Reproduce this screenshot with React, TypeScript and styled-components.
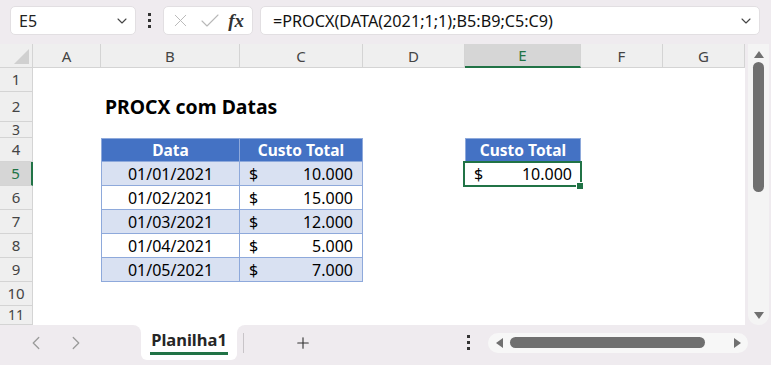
import styled, { createGlobalStyle } from 'styled-components';
import { Check, ChevronDown, ChevronLeft, ChevronRight, Plus, X } from 'lucide-react';

const GREEN = '#217346';
const TABLE_LINE = '#8ea9db';
const BAND = '#d9e1f2';
const HEAD_BLUE = '#4472c4';
const CHROME = '#efebef';
const COLS = '33px 68px 139px 123px 102px 116px 82px 82px';

const letters = ['A', 'B', 'C', 'D', 'E', 'F', 'G'];
const rowHeights = [24, 30, 16, 24, 24, 24, 24, 24, 24, 24, 19];

const data = [
  ['01/01/2021', '10.000'],
  ['01/02/2021', '15.000'],
  ['01/03/2021', '12.000'],
  ['01/04/2021', '5.000'],
  ['01/05/2021', '7.000'],
];

const GlobalStyle = createGlobalStyle`
  html, body {
    margin: 0;
    padding: 0;
  }
  body {
    width: 771px;
    height: 365px;
    overflow: hidden;
    font-family: 'Noto Sans', 'Open Sans', sans-serif;
    color: #000;
  }
`;

function Triangle({ dir }: { dir: 'up' | 'down' | 'left' | 'right' }) {
  const pts = {
    up: '0,7 5,0 10,7',
    down: '0,0 10,0 5,7',
    left: '7,0 7,10 0,5',
    right: '0,0 7,5 0,10',
  }[dir];
  const vertical = dir === 'up' || dir === 'down';
  return (
    <svg width={vertical ? 10 : 7} height={vertical ? 7 : 10}>
      <polygon points={pts} fill="#707070" />
    </svg>
  );
}

function cellsFor(row: number) {
  const cells = letters.map((l) => <Blank key={l} />);

  if (row === 2) {
    cells[1] = (
      <TitleCell key="B">
        <Title>PROCX com Datas</Title>
      </TitleCell>
    );
  }

  if (row === 4) {
    cells[1] = (
      <TableCell key="B" $fill="head" $left $top $center>
        Data
      </TableCell>
    );
    cells[2] = (
      <TableCell key="C" $fill="head" $top $center>
        Custo Total
      </TableCell>
    );
    cells[4] = (
      <TableCell key="E" $fill="head" $left $top $center>
        Custo Total
      </TableCell>
    );
  }

  if (row >= 5 && row <= 9) {
    const [date, cost] = data[row - 5];
    const fill = row % 2 === 1 ? 'band' : 'plain';
    cells[1] = (
      <TableCell key="B" $fill={fill} $left $center>
        {date}
      </TableCell>
    );
    cells[2] = (
      <TableCell key="C" $fill={fill}>
        <Money>
          <span>$</span>
          <span>{cost}</span>
        </Money>
      </TableCell>
    );
  }

  if (row === 5) {
    cells[4] = (
      <Selected key="E">
        <Money>
          <span>$</span>
          <span>10.000</span>
        </Money>
      </Selected>
    );
  }

  return cells;
}

export default function App() {
  return (
    <Window>
      <GlobalStyle />
      <Toolbar>
        <NameBox>
          <span>E5</span>
          <ChevronDown size={16} strokeWidth={1.6} color="#444" />
        </NameBox>
        <KebabSlot>
          <Kebab>
            <i />
            <i />
            <i />
          </Kebab>
        </KebabSlot>
        <FxBox>
          <X size={21} strokeWidth={1.1} color="#b8b8b8" />
          <Check size={24} strokeWidth={1.1} color="#b8b8b8" />
          <Fx>fx</Fx>
        </FxBox>
        <FormulaBox>
          <FormulaText>=PROCX(DATA(2021;1;1);B5:B9;C5:C9)</FormulaText>
          <ChevronDown size={16} strokeWidth={1.6} color="#444" />
        </FormulaBox>
      </Toolbar>

      <Main>
        <Sheet>
          <Row $h={24}>
            <Corner />
            {letters.map((l) => (
              <ColHead key={l} $active={l === 'E'}>
                {l}
              </ColHead>
            ))}
          </Row>
          {rowHeights.map((h, i) => (
            <Row key={i} $h={h}>
              <RowHead $active={i + 1 === 5} $small={h < 20}>
                {i + 1}
              </RowHead>
              {cellsFor(i + 1)}
            </Row>
          ))}
        </Sheet>
        <VScroll>
          <Triangle dir="up" />
          <VThumb />
          <VSpacer />
          <Triangle dir="down" />
        </VScroll>
      </Main>

      <BottomBar>
        <NavGroup>
          <ChevronLeft size={22} strokeWidth={1.4} color="#9a9a9a" />
          <ChevronRight size={22} strokeWidth={1.4} color="#9a9a9a" />
        </NavGroup>
        <SheetTab>
          <TabLabel>Planilha1</TabLabel>
        </SheetTab>
        <BarRest>
          <TabDivider />
          <AddButton>
            <Plus size={18} strokeWidth={1.5} color="#333" />
          </AddButton>
          <BottomKebab>
            <Kebab>
              <i />
              <i />
              <i />
            </Kebab>
          </BottomKebab>
          <HScroll>
            <Triangle dir="left" />
            <HThumb />
            <Triangle dir="right" />
          </HScroll>
        </BarRest>
      </BottomBar>
    </Window>
  );
}

const Window = styled.div`
  width: 771px;
  height: 365px;
  display: flex;
  flex-direction: column;
  background: ${CHROME};
  overflow: hidden;
`;

const Toolbar = styled.div`
  height: 44px;
  box-sizing: border-box;
  padding: 6px 11px 9px 10px;
  display: flex;
  align-items: stretch;
`;

const WhiteBox = styled.div`
  background: #fff;
  border: 1px solid #e2dfe2;
  border-radius: 5px;
  box-sizing: border-box;
  display: flex;
  align-items: center;
`;

const NameBox = styled(WhiteBox)`
  width: 126px;
  padding: 0 5px 0 8px;
  justify-content: space-between;
  font-size: 16px;
  color: #222;
`;

const KebabSlot = styled.div`
  width: 27px;
  display: flex;
  align-items: center;
  justify-content: center;
`;

const Kebab = styled.div`
  display: flex;
  flex-direction: column;
  gap: 3px;

  i {
    display: block;
    width: 3px;
    height: 3px;
    background: #333;
  }
`;

const FxBox = styled(WhiteBox)`
  width: 90px;
  padding: 0 6px 0 6px;
  justify-content: space-between;
`;

const Fx = styled.span`
  font-family: 'Liberation Serif', 'DejaVu Serif', serif;
  font-style: italic;
  font-weight: bold;
  font-size: 19px;
  color: #333;
  margin-right: 2px;
`;

const FormulaBox = styled(WhiteBox)`
  flex: 1;
  margin-left: 7px;
  padding: 0 5px 0 12px;
  justify-content: space-between;
`;

const FormulaText = styled.span`
  font-size: 16.2px;
  color: #111;
`;

const Main = styled.div`
  height: 281px;
  display: flex;
`;

const Sheet = styled.div`
  width: 745px;
  background: #fff;
  display: flex;
  flex-direction: column;
  overflow: hidden;
`;

const Row = styled.div<{ $h: number }>`
  height: ${(p) => p.$h}px;
  flex: none;
  display: grid;
  grid-template-columns: ${COLS};
`;

const Corner = styled.div`
  background: #efefef;
  border-right: 1px solid #d4d4d4;
  border-bottom: 1px solid #d4d4d4;
  box-sizing: border-box;
  position: relative;

  &::after {
    content: '';
    position: absolute;
    right: 3px;
    bottom: 3px;
    border-style: solid;
    border-width: 0 0 15px 15px;
    border-color: transparent transparent #d0d0d0 transparent;
  }
`;

const ColHead = styled.div<{ $active?: boolean }>`
  box-sizing: border-box;
  background: ${(p) => (p.$active ? '#d6d6d6' : '#efefef')};
  border-right: 1px solid #d4d4d4;
  border-bottom: ${(p) => (p.$active ? `2px solid ${GREEN}` : '1px solid #d4d4d4')};
  color: ${(p) => (p.$active ? GREEN : '#444')};
  font-size: 15px;
  display: flex;
  align-items: center;
  justify-content: center;
`;

const RowHead = styled.div<{ $active?: boolean; $small?: boolean }>`
  box-sizing: border-box;
  background: ${(p) => (p.$active ? '#d6d6d6' : '#efefef')};
  border-right: ${(p) => (p.$active ? `2px solid ${GREEN}` : '1px solid #d4d4d4')};
  border-bottom: 1px solid #d4d4d4;
  color: ${(p) => (p.$active ? GREEN : '#444')};
  font-size: ${(p) => (p.$small ? 14 : 15)}px;
  line-height: ${(p) => (p.$small ? 14 : 15)}px;
  display: flex;
  align-items: center;
  justify-content: center;
  overflow: hidden;
`;

const Blank = styled.div``;

const TitleCell = styled.div`
  display: flex;
  align-items: flex-end;
  padding: 0 0 3px 4px;
  white-space: nowrap;
  position: relative;
  z-index: 1;
`;

const Title = styled.span`
  font-weight: bold;
  font-size: 19.4px;
  line-height: 24px;
  color: #000;
`;

const TableCell = styled.div<{
  $fill: 'head' | 'band' | 'plain';
  $left?: boolean;
  $top?: boolean;
  $center?: boolean;
}>`
  box-sizing: border-box;
  background: ${(p) => (p.$fill === 'head' ? HEAD_BLUE : p.$fill === 'band' ? BAND : '#fff')};
  color: ${(p) => (p.$fill === 'head' ? '#fff' : '#000')};
  font-weight: ${(p) => (p.$fill === 'head' ? 'bold' : 'normal')};
  font-size: ${(p) => (p.$fill === 'head' ? 15.5 : 16)}px;
  border-right: 1px solid ${TABLE_LINE};
  border-bottom: 1px solid ${TABLE_LINE};
  border-left: ${(p) => (p.$left ? `1px solid ${TABLE_LINE}` : 'none')};
  border-top: ${(p) => (p.$top ? `1px solid ${TABLE_LINE}` : 'none')};
  display: flex;
  align-items: center;
  justify-content: ${(p) => (p.$center ? 'center' : 'stretch')};
  white-space: nowrap;
`;

const Money = styled.div`
  flex: 1;
  display: flex;
  justify-content: space-between;
  padding: 0 9px 0 9px;
  font-size: 16px;
`;

const Selected = styled.div`
  position: relative;
  display: flex;
  align-items: center;
  background: #fff;

  &::before {
    content: '';
    position: absolute;
    inset: -1px -1px -1px -2px;
    border: 2px solid ${GREEN};
  }

  &::after {
    content: '';
    position: absolute;
    right: -3px;
    bottom: -4px;
    width: 6px;
    height: 6px;
    background: ${GREEN};
    border: 1px solid #fff;
  }
`;

const VScroll = styled.div`
  flex: 1;
  margin: 0 2px 0 3px;
  background: #f4f4f4;
  border-radius: 0 0 10px 10px;
  display: flex;
  flex-direction: column;
  align-items: center;
  padding: 7px 0 6px;
  gap: 4px;
`;

const VThumb = styled.div`
  width: 11px;
  height: 130px;
  border-radius: 6px;
  background: #6f6f6f;
`;

const VSpacer = styled.div`
  flex: 1;
`;

const BottomBar = styled.div`
  height: 40px;
  display: flex;
  background: linear-gradient(#fff 0 12px, ${CHROME} 12px);
`;

const NavGroup = styled.div`
  width: 141px;
  background: ${CHROME};
  border-top-right-radius: 8px;
  display: flex;
  align-items: center;
  padding: 0 0 4px 25px;
  gap: 18px;
  box-sizing: border-box;
`;

const SheetTab = styled.div`
  width: 96px;
  height: 35px;
  background: #fff;
  border-radius: 0 0 6px 6px;
  display: flex;
  justify-content: center;
`;

const TabLabel = styled.span`
  margin-top: 3px;
  height: 27px;
  box-sizing: border-box;
  border-bottom: 3px solid ${GREEN};
  font-weight: bold;
  font-size: 16.5px;
  line-height: 24px;
  color: #262626;
  padding: 0 1px;
`;

const BarRest = styled.div`
  flex: 1;
  background: ${CHROME};
  border-top-left-radius: 8px;
  display: flex;
  align-items: center;
  padding-bottom: 5px;
`;

const TabDivider = styled.div`
  width: 1px;
  height: 20px;
  margin-left: 6px;
  background: #c8c4c8;
`;

const AddButton = styled.div`
  margin-left: 50px;
  display: flex;
`;

const BottomKebab = styled.div`
  margin-left: 155px;
`;

const HScroll = styled.div`
  margin-left: 18px;
  width: 260px;
  height: 20px;
  background: #f7f7f7;
  border-radius: 10px;
  display: flex;
  align-items: center;
  padding: 0 7px 0 8px;
  box-sizing: border-box;
  gap: 7px;
`;

const HThumb = styled.div`
  width: 195px;
  height: 11px;
  border-radius: 6px;
  background: #6f6f6f;
  margin-right: auto;
`;
